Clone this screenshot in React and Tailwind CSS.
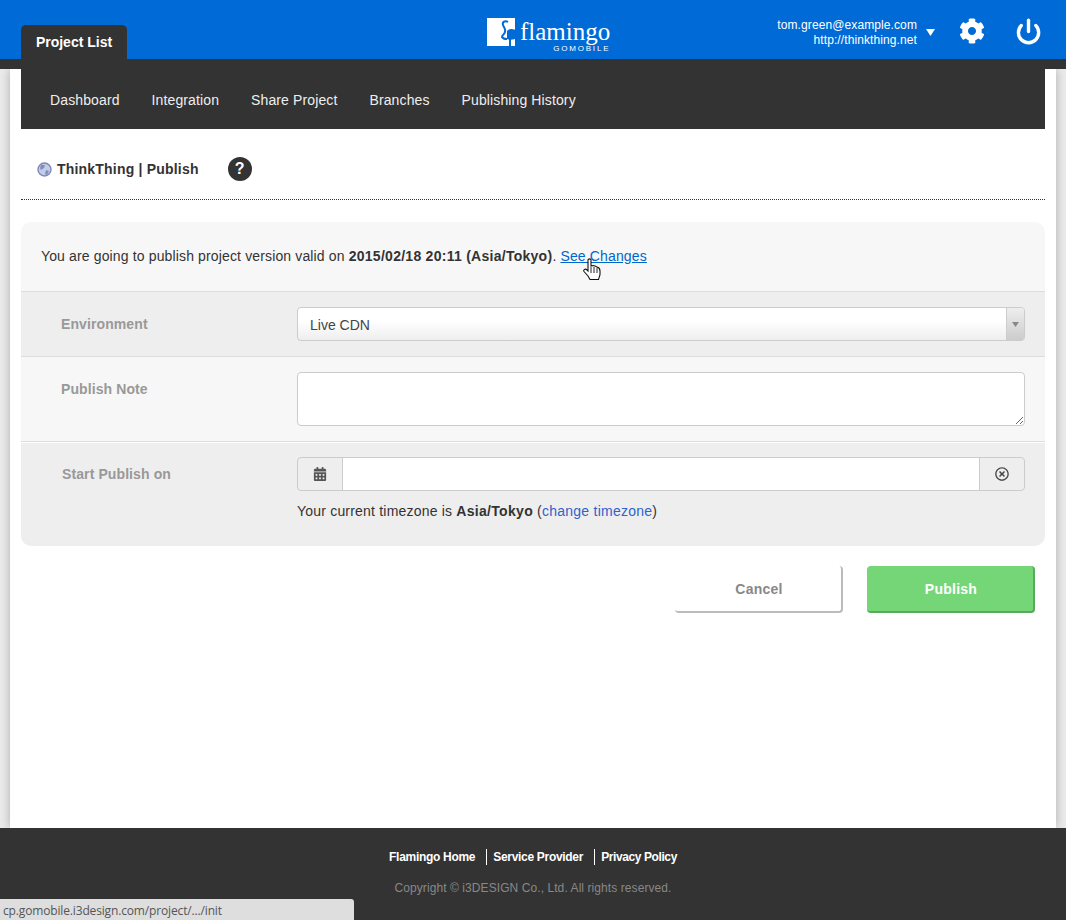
import { Power } from "lucide-react";
import { FaCog, FaCalendarAlt, FaRegTimesCircle } from "react-icons/fa";

const font = "font-['Liberation_Sans',Arial,sans-serif]";

function Logo() {
  return (
    <div className="flex items-start">
      <svg width="30" height="28" viewBox="0 0 30 28" className="mt-[18px]">
        <path d="M0 0H28V28H0Z" fill="#fff" />
        <path
          d="M21 4C18 2 15 4 16 7C17 10 19 11 18 14C17 17 15 17 15 19C16 21 18 21 20 21"
          fill="none"
          stroke="#006bd6"
          strokeWidth="2"
        />
        <path d="M20 13C23 10 27 11 30 13V20C27 22 23 22 20 21Z" fill="#006bd6" />
        <path d="M22 21V28H24V21Z" fill="#006bd6" />
      </svg>
      <div className="ml-[3px] mt-[18px] flex flex-col items-end">
        <span className="font-['Liberation_Serif',serif] text-[25px] leading-[28px] text-white">flamingo</span>
        <span className="mt-[-1px] text-[8px] leading-[8px] text-white tracking-[1.8px]">GOMOBILE</span>
      </div>
    </div>
  );
}

function Header() {
  return (
    <header className="relative h-[59px] shrink-0 bg-[#006bd6] flex items-end justify-between pl-[21px] pr-[24px]">
      <div className="h-[34px] w-[106px] rounded-t-[5px] bg-[#333333] flex items-center justify-center text-[14px] font-bold text-white">
        Project List
      </div>
      <div className="absolute left-[487px] top-0">
        <Logo />
      </div>
      <div className="self-start flex items-center h-[59px]">
        <div className="text-right text-[12px] leading-[15px] tracking-[0.1px] text-white mr-[9px] mt-[7px]">
          <div>tom.green@example.com</div>
          <div>http://thinkthing.net</div>
        </div>
        <svg width="9" height="7" viewBox="0 0 9 7" className="mr-[24px] mt-[6px]">
          <path d="M0 0H9L4.5 7Z" fill="#fff" />
        </svg>
        <FaCog size={26} color="#fff" className="mr-[30px] mt-[3px]" />
        <Power size={27} color="#fff" strokeWidth={3} className="mt-[3px]" />
      </div>
    </header>
  );
}

function Nav() {
  const items = ["Dashboard", "Integration", "Share Project", "Branches", "Publishing History"];
  return (
    <nav className="h-[60px] shrink-0 bg-[#333333] flex items-center gap-[32px] pl-[29px] pt-[2px] text-[14px] tracking-[0.12px] text-[#eeeeee]">
      {items.map((item) => (
        <a key={item}>{item}</a>
      ))}
    </nav>
  );
}

function Globe() {
  return (
    <svg width="15" height="15" viewBox="0 0 15 15" className="mr-[5px]">
      <circle cx="7.5" cy="7.5" r="6.5" fill="#c5cde6" stroke="#7f88b5" strokeWidth="1.4" />
      <path d="M4 3L8 3L7 6L4 8L3 6ZM9 8L12 9L10 13L8 12Z" fill="#7f8fc0" />
    </svg>
  );
}

function Cursor() {
  return (
    <svg width="18" height="23" viewBox="0 0 18 23" className="absolute left-[583px] top-[258px]">
      <path
        d="M5 2C5 0.5 8 0.5 8 2V8L10 7.5L12 8L14 9C16 9.5 17 11 17 13V16C17 18 16 19 15.5 21.5H7L5 18L1 13.5C0 12 2 10.5 3.5 11.5L5 13Z"
        fill="#fff"
        stroke="#111"
        strokeWidth="1.1"
      />
      <path d="M8 9V15M11 9V15M14 10V15" stroke="#111" strokeWidth="0.9" />
    </svg>
  );
}

function Row({ label, labelClass, className, children }) {
  return (
    <div className={`flex pr-[20px] ${className}`}>
      <div className={`w-[276px] shrink-0 text-[14px] font-bold tracking-[0.1px] text-[#999999] ${labelClass}`}>{label}</div>
      <div className="flex-1 min-w-0">{children}</div>
    </div>
  );
}

function PublishForm() {
  return (
    <section className="mt-[22px] rounded-[10px] overflow-hidden text-[14px] text-[#333333]">
      <div className="h-[70px] bg-[#f7f7f7] border-b border-[#dddddd] pl-[20px] pt-[25px] leading-[18px] tracking-[0.14px]">
        You are going to publish project version valid on <b className="tracking-[0.27px]">2015/02/18 20:11 (Asia/Tokyo)</b>.{" "}
        <a className="text-[#0066cc] underline">See Changes</a>
      </div>
      <Row label="Environment" labelClass="pl-[40px] pt-[22px]" className="h-[65px] bg-[#eeeeee] border-b border-[#dddddd]">
        <div className="mt-[15px] h-[34px] flex rounded-[4px] border border-[#cccccc] bg-gradient-to-b from-white from-40% to-[#eeeeee] overflow-hidden">
          <div className="flex-1 pl-[12px] leading-[35px] text-[#444444]">Live CDN</div>
          <div className="w-[18px] border-l border-[#cccccc] bg-gradient-to-b from-[#eeeeee] to-[#cccccc] flex items-center justify-center">
            <svg width="7" height="5" viewBox="0 0 7 5">
              <path d="M0 0H7L3.5 5Z" fill="#888888" />
            </svg>
          </div>
        </div>
      </Row>
      <Row label="Publish Note" labelClass="pl-[40px] pt-[22px]" className="h-[85px] bg-[#f7f7f7] border-b border-[#dddddd]">
        <textarea className="mt-[15px] block w-full h-[54px] rounded-[4px] border border-[#cccccc] bg-white outline-none" />
      </Row>
      <Row label="Start Publish on" labelClass="pl-[41px] pt-[21px]" className="h-[104px] bg-[#eeeeee] border-t border-white">
        <div className="mt-[14px] h-[34px] flex rounded-[4px] border border-[#cccccc] overflow-hidden">
          <div className="w-[45px] border-r border-[#cccccc] flex items-center justify-center">
            <FaCalendarAlt size={14} color="#555555" />
          </div>
          <div className="flex-1 bg-white"></div>
          <div className="w-[45px] border-l border-[#cccccc] flex items-center justify-center">
            <FaRegTimesCircle size={14} color="#444444" />
          </div>
        </div>
        <p className="mt-[11px] leading-[18px] tracking-[0.2px]">
          Your current timezone is <b className="tracking-[0.3px]">Asia/Tokyo</b> (<a className="text-[#2f62cc] tracking-[0.25px]">change timezone</a>)
        </p>
      </Row>
    </section>
  );
}

function Buttons() {
  return (
    <div className="mt-[20px] flex justify-end gap-[24px] pr-[10px] text-[14px] font-bold tracking-[0.25px]">
      <button className="w-[168px] h-[47px] pt-[1px] pl-[2px] rounded-[4px] bg-white border-r-2 border-b-2 border-[#bbbbbb] text-[#888888]">Cancel</button>
      <button className="w-[168px] h-[47px] pt-[1px] pl-[2px] rounded-[4px] bg-[#75d677] border-r-2 border-b-2 border-[#5aa85c] text-white">Publish</button>
    </div>
  );
}

function Footer() {
  return (
    <footer className="relative z-10 h-[92px] shrink-0 bg-[#333333] flex flex-col items-center pt-[21px]">
      <div className="flex text-[12px] leading-[16px] font-bold tracking-[-0.3px] text-white">
        <a>Flamingo Home</a>
        <a className="ml-[11px] border-l border-white pl-[6px]">Service Provider</a>
        <a className="ml-[11px] border-l border-white pl-[6px] tracking-[-0.4px]">Privacy Policy</a>
      </div>
      <p className="mt-[15px] text-[12px] leading-[16px] tracking-[0.08px] text-[#888888]">Copyright © i3DESIGN Co., Ltd. All rights reserved.</p>
    </footer>
  );
}

export default function App() {
  return (
    <div className={`relative h-[920px] flex flex-col bg-[#ececec] overflow-hidden ${font}`}>
      <Header />
      <div className="relative z-10 h-[10px] shrink-0 bg-[#333333]"></div>
      <main className="flex-1 mx-[10px] px-[11px] bg-white shadow-[0_0_10px_#aaaaaa] flex flex-col">
        <Nav />
        <div className="h-[71px] shrink-0 border-b border-dotted border-[#333333] flex items-center pl-[16px] pt-[10px] text-[14px] font-bold text-[#333333] tracking-[0.2px]">
          <Globe />
          <span>ThinkThing | Publish</span>
          <span className="ml-[29px] w-[24px] h-[24px] rounded-full bg-[#333333] text-white flex items-center justify-center text-[16px]">?</span>
        </div>
        <PublishForm />
        <Buttons />
      </main>
      <Footer />
      <Cursor />
      <div className="absolute z-20 left-0 bottom-0 w-[354px] h-[21px] bg-[#dedede] rounded-tr-[3px] pl-[3px] text-[12px] leading-[23px] tracking-[-0.15px] text-[#555555] font-['Open_Sans',sans-serif]">
        cp.gomobile.i3design.com/project/.../init
      </div>
    </div>
  );
}
